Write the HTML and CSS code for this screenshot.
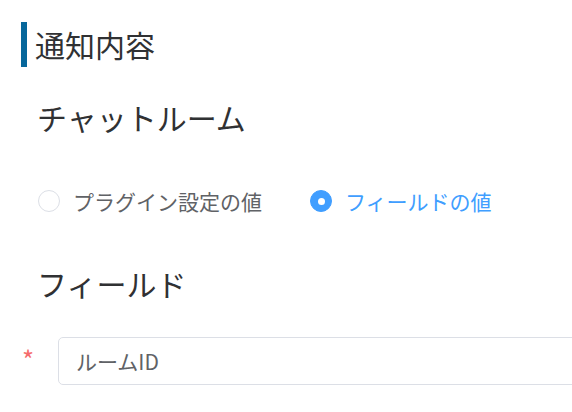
FILE: index.html
```html
<!DOCTYPE html>
<html lang="ja">
<head>
<meta charset="utf-8">
<link rel="stylesheet" href="styles.css">
</head>
<body>
<div class="page">
  <h2 class="section-title">通知内容</h2>
  <h3 class="sub-title">チャットルーム</h3>
  <div class="radio-group">
    <label class="radio">
      <span class="radio-circle"></span>
      <span class="radio-label">プラグイン設定の値</span>
    </label>
    <label class="radio is-checked">
      <span class="radio-circle"></span>
      <span class="radio-label">フィールドの値</span>
    </label>
  </div>
  <h3 class="sub-title sub-title-field">フィールド</h3>
  <div class="field-row">
    <span class="required">*</span>
    <div class="input">ルームID</div>
  </div>
</div>
</body>
</html>
```
FILE: styles.css
```css
html, body {
  margin: 0;
  padding: 0;
  overflow: hidden;
  background: #ffffff;
}
body {
  font-family: "Noto Sans CJK JP", "Noto Sans", sans-serif;
  color: #303133;
}
.page {
  width: 572px;
  height: 412px;
  box-sizing: border-box;
  padding-top: 22px;
  overflow: hidden;
}
.section-title {
  margin: 0 0 0 21px;
  border-left: 6px solid #07679b;
  padding-left: 8px;
  height: 45px;
  line-height: 45px;
  font-size: 30px;
  font-weight: normal;
}
.sub-title {
  margin: 30px 0 0 0;
  padding-left: 37px;
  height: 40px;
  line-height: 40px;
  font-size: 30px;
  font-weight: normal;
}
.sub-title-field {
  margin-top: 42px;
}
.radio-group {
  margin-top: 44px;
  padding-left: 38px;
  height: 40px;
  display: flex;
  align-items: center;
}
.radio {
  display: inline-flex;
  align-items: center;
  margin-right: 48px;
}
.radio-circle {
  box-sizing: border-box;
  width: 22px;
  height: 22px;
  border: 1px solid #dcdfe6;
  border-radius: 50%;
  margin-right: 13px;
  position: relative;
}
.radio.is-checked .radio-circle {
  background: #409eff;
  border-color: #409eff;
}
.radio.is-checked .radio-circle::after {
  content: "";
  position: absolute;
  left: 50%;
  top: 50%;
  width: 7px;
  height: 7px;
  margin: -3.5px 0 0 -3.5px;
  border-radius: 50%;
  background: #ffffff;
}
.radio-label {
  font-size: 21px;
  line-height: 40px;
  color: #606266;
}
.radio.is-checked .radio-label {
  color: #409eff;
}
.field-row {
  margin-top: 34px;
  display: flex;
  align-items: flex-start;
  overflow: hidden;
}
.required {
  flex: none;
  width: 58px;
  padding-left: 22px;
  box-sizing: border-box;
  color: #f56c6c;
  font-size: 26px;
  line-height: 44px;
}
.input {
  flex: none;
  width: 560px;
  height: 48px;
  box-sizing: border-box;
  border: 1px solid #dcdfe6;
  border-radius: 5px;
  padding-left: 17px;
  font-size: 21px;
  line-height: 46px;
  color: #606266;
}
```
